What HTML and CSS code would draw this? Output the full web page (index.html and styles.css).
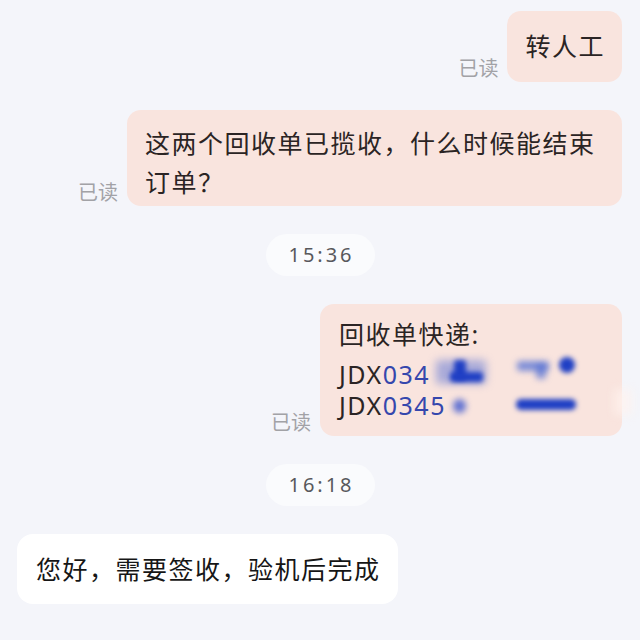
FILE: index.html
```html
<!DOCTYPE html>
<html lang="zh-CN">

<head>
  <meta charset="UTF-8" />
  <meta name="viewport" content="width=device-width, initial-scale=1.0" />
  <title>客服对话</title>
  <link rel="stylesheet" href="styles.css">
</head>

<body>
  <div class="chat">
    <div class="row out">
      <span class="read">已读</span>
      <div class="bubble">转人工</div>
    </div>

    <div class="row out">
      <span class="read">已读</span>
      <div class="bubble multi">这两个回收单已揽收，什么时候能结束订单？</div>
    </div>

    <div class="time">15:36</div>

    <div class="row out">
      <span class="read">已读</span>
      <div class="bubble express">
        <div class="title">回收单快递:</div>
        <div class="code">JDX<span class="num">034</span></div>
        <div class="code">JDX<span class="num">0345</span></div>

        <!-- 打码 -->
        <span class="smudge a-light"></span>
        <span class="smudge a-stem"></span>
        <span class="smudge a-base"></span>
        <span class="smudge b-dash"></span>
        <span class="smudge b-drop"></span>
        <span class="smudge b-dot"></span>
        <span class="smudge c-dot"></span>
        <span class="smudge c-bar"></span>
        <span class="smudge edge"></span>
      </div>
    </div>

    <div class="time">16:18</div>

    <div class="row in">
      <div class="bubble white">您好，需要签收，验机后完成</div>
    </div>
  </div>
</body>

</html>
```

FILE: styles.css
```css
* {
  box-sizing: border-box;
}

body {
  margin: 0;
  background: #f4f5fa;
  font-family: "Noto Sans", "Noto Sans CJK SC", sans-serif;
  color: #222;
}

.chat {
  display: flex;
  flex-direction: column;
  gap: 28px;
  padding: 11px 18px 0 17px;
}

.row {
  display: flex;
  align-items: flex-end;
  gap: 9px;
}

.row.out {
  justify-content: flex-end;
}

.row.in {
  justify-content: flex-start;
}

.read {
  font-size: 20px;
  line-height: 20px;
  color: #a2a2a6;
  padding-bottom: 3px;
  white-space: nowrap;
}

.bubble {
  position: relative;
  max-width: 495px;
  padding: 16px 17px 16px 18px;
  font-size: 25px;
  line-height: 39px;
  letter-spacing: 1.5px;
  background: #f9e4de;
  color: #2b2424;
  border-radius: 14px;
}

.bubble.multi {
  padding: 14px 17px 4px 18px;
}

.bubble.express {
  width: 302px;
  padding: 11px 17px 15px 19px;
}

.bubble.white {
  background: #ffffff;
  color: #161616;
  border-radius: 16px;
  padding: 16px 17px 15px 19px;
}

.title {
  line-height: 39px;
  margin-bottom: 5px;
}

.code {
  line-height: 31px;
  white-space: nowrap;
}

.num {
  color: #3547ad;
}

.time {
  align-self: center;
  margin-left: 2px;
  padding: 0 20px 0 22px;
  height: 42px;
  line-height: 42px;
  font-size: 20px;
  letter-spacing: 3px;
  color: #58585c;
  background: #fafbfd;
  border-radius: 21px;
}

/* 打码的模糊块 */
.smudge {
  position: absolute;
  display: block;
  background: #1f3fc4;
  filter: blur(2.5px);
  border-radius: 3px;
}

.a-light {
  left: 116px;
  top: 56px;
  width: 50px;
  height: 24px;
  background: rgba(70, 100, 210, 0.45);
  filter: blur(4px);
}

.a-stem {
  left: 134px;
  top: 56px;
  width: 12px;
  height: 20px;
}

.a-base {
  left: 130px;
  top: 68px;
  width: 33px;
  height: 10px;
}

.b-dash {
  left: 197px;
  top: 57px;
  width: 32px;
  height: 10px;
  background: rgba(60, 95, 210, 0.65);
  filter: blur(3px);
}

.b-drop {
  left: 216px;
  top: 61px;
  width: 10px;
  height: 14px;
  background: rgba(60, 95, 210, 0.6);
  filter: blur(3px);
}

.b-dot {
  left: 239px;
  top: 53px;
  width: 16px;
  height: 16px;
  border-radius: 50%;
}

.c-dot {
  left: 133px;
  top: 95px;
  width: 13px;
  height: 14px;
  border-radius: 50%;
  background: rgba(45, 75, 205, 0.75);
  filter: blur(3px);
}

.c-bar {
  left: 196px;
  top: 95px;
  width: 60px;
  height: 11px;
  border-radius: 5px;
}

.edge {
  left: 294px;
  top: 85px;
  width: 18px;
  height: 26px;
  background: rgba(255, 242, 238, 0.7);
  filter: blur(5px);
}
```
